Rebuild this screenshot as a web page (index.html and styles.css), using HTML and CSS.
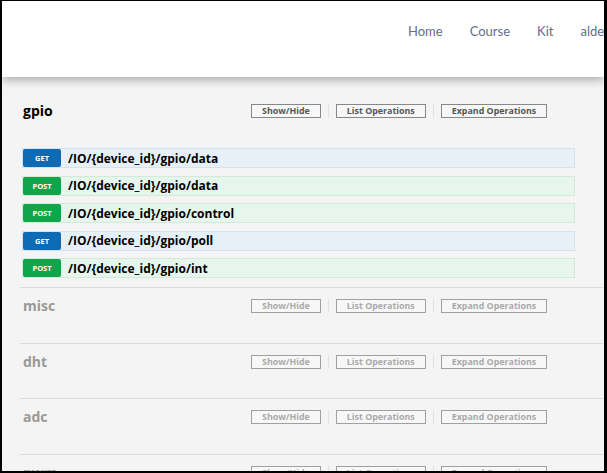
FILE: index.html
```html
<!DOCTYPE html>
<html>
<head>
<meta charset="utf-8">
<link rel="stylesheet" href="styles.css">
</head>
<body>
<div class="frame">
  <header class="topbar">
    <nav class="nav">
      <a class="nav-link">Home</a>
      <a class="nav-link">Course</a>
      <a class="nav-link">Kit</a>
      <a class="nav-link">alder</a>
    </nav>
  </header>
  <main class="content">
    <section class="resource resource-open resource-first">
      <div class="resource-head">
        <h2 class="resource-title">gpio</h2>
        <ul class="resource-actions">
          <li class="action"><span class="action-btn">Show/Hide</span></li>
          <li class="action"><span class="action-btn">List Operations</span></li>
          <li class="action"><span class="action-btn">Expand Operations</span></li>
        </ul>
      </div>
      <ul class="ops">
        <li class="op op-get"><span class="verb verb-get">GET</span><span class="path">/IO/{device_id}/gpio/data</span></li>
        <li class="op op-post"><span class="verb verb-post">POST</span><span class="path">/IO/{device_id}/gpio/data</span></li>
        <li class="op op-post"><span class="verb verb-post">POST</span><span class="path">/IO/{device_id}/gpio/control</span></li>
        <li class="op op-get"><span class="verb verb-get">GET</span><span class="path">/IO/{device_id}/gpio/poll</span></li>
        <li class="op op-post"><span class="verb verb-post">POST</span><span class="path">/IO/{device_id}/gpio/int</span></li>
      </ul>
    </section>
    <section class="resource">
      <div class="resource-head">
        <h2 class="resource-title">misc</h2>
        <ul class="resource-actions">
          <li class="action"><span class="action-btn">Show/Hide</span></li>
          <li class="action"><span class="action-btn">List Operations</span></li>
          <li class="action"><span class="action-btn">Expand Operations</span></li>
        </ul>
      </div>
    </section>
    <section class="resource">
      <div class="resource-head">
        <h2 class="resource-title">dht</h2>
        <ul class="resource-actions">
          <li class="action"><span class="action-btn">Show/Hide</span></li>
          <li class="action"><span class="action-btn">List Operations</span></li>
          <li class="action"><span class="action-btn">Expand Operations</span></li>
        </ul>
      </div>
    </section>
    <section class="resource">
      <div class="resource-head">
        <h2 class="resource-title">adc</h2>
        <ul class="resource-actions">
          <li class="action"><span class="action-btn">Show/Hide</span></li>
          <li class="action"><span class="action-btn">List Operations</span></li>
          <li class="action"><span class="action-btn">Expand Operations</span></li>
        </ul>
      </div>
    </section>
    <section class="resource">
      <div class="resource-head">
        <h2 class="resource-title">pwm</h2>
        <ul class="resource-actions">
          <li class="action"><span class="action-btn">Show/Hide</span></li>
          <li class="action"><span class="action-btn">List Operations</span></li>
          <li class="action"><span class="action-btn">Expand Operations</span></li>
        </ul>
      </div>
    </section>
  </main>
</div>
</body>
</html>
```
FILE: styles.css
```css
html, body {
  margin: 0;
  padding: 0;
  background: #000;
}
.frame {
  width: 607px;
  height: 473px;
  box-sizing: border-box;
  border-style: solid;
  border-color: #000;
  border-width: 1px 3px 2px 2px;
  background: #f4f4f4;
  overflow: hidden;
  font-family: "Open Sans", "DejaVu Sans", sans-serif;
}
.topbar {
  position: relative;
  z-index: 1;
  height: 76px;
  background: #fff;
  box-shadow: 0 3px 9px rgba(0, 0, 0, 0.3);
}
.nav {
  display: flex;
  white-space: nowrap;
  padding: 21px 0 0 392.5px;
  font-family: Lato, "Liberation Sans", sans-serif;
  font-size: 13px;
  line-height: 18px;
  color: #656c8c;
}
.nav-link {
  padding: 0 13.5px;
}
.content {
  padding-top: 15px;
}
.resource {
  margin-left: 18px;
  padding: 11px 0 0 3px;
  border-top: 1px solid #dddddd;
}
.resource-first {
  border-top-color: transparent;
}
.resource-head {
  display: grid;
  grid-template-columns: 228px auto;
  align-items: center;
  height: 14px;
  margin-bottom: 29.7px;
}
.resource-open .resource-head {
  margin-bottom: 30px;
}
.resource-title {
  margin: 0;
  font-size: 14px;
  line-height: 14px;
  font-weight: 700;
  color: #999;
}
.resource-open .resource-title {
  color: #000;
}
.resource-actions {
  display: flex;
  margin: 0;
  padding: 0;
  list-style: none;
}
.action {
  padding: 0 7px;
  border-right: 1px solid #e2e2e2;
  display: flex;
}
.action:first-child {
  padding-left: 0;
}
.action:last-child {
  border-right: none;
}
.action-btn {
  display: block;
  height: 14px;
  box-sizing: border-box;
  padding: 0 10px;
  border: 1px solid #a0a0a0;
  background: #f7f7f7;
  color: #aaa;
  font-size: 8.9px;
  line-height: 12px;
  font-weight: 700;
}
.resource-open .action-btn {
  border-color: #888;
  color: #555;
}
.ops {
  margin: 0;
  padding: 0 0 1.5px;
  list-style: none;
}
.op {
  display: flex;
  align-items: center;
  width: 553px;
  height: 20px;
  box-sizing: border-box;
  border: 1px solid;
  margin-left: -1px;
  margin-bottom: 7.5px;
}
.op-get {
  background: #e7f0f7;
  border-color: #d2e2f0;
}
.op-post {
  background: #e7f6ec;
  border-color: #d0ecd9;
}
.verb {
  width: 38px;
  height: 18px;
  display: flex;
  align-items: center;
  justify-content: center;
  border-radius: 2px;
  color: #fff;
  font-size: 7.5px;
  font-weight: 700;
}
.verb-get {
  background: #0f6ab4;
}
.verb-post {
  background: #10a54a;
}
.path {
  margin-left: 7px;
  font-size: 12px;
  font-weight: 700;
  color: #000;
}
```
